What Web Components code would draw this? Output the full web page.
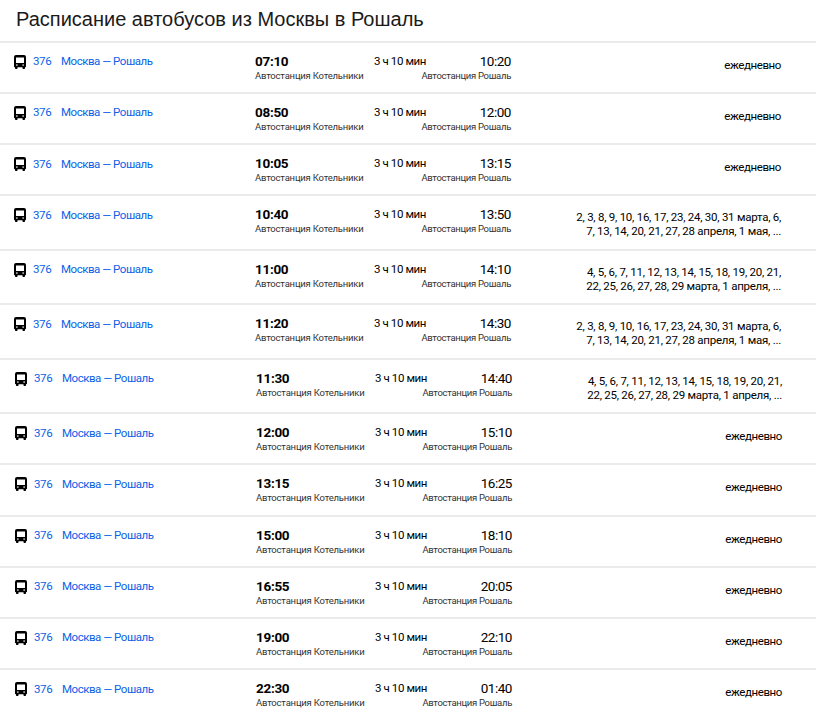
<!DOCTYPE html>
<html lang="ru">
<head>
<meta charset="utf-8">
<title>Расписание</title>
<style>
  html, body { margin: 0; background: #fff; }
  body { font-family: Roboto, "Liberation Sans", sans-serif; color: #000; }
</style>
</head>
<body>
<schedule-page heading="Расписание автобусов из Москвы в Рошаль">
  <bus-row dep="07:10" arr="10:20" days="ежедневно" tall="51"></bus-row>
  <bus-row dep="08:50" arr="12:00" days="ежедневно" tall="51"></bus-row>
  <bus-row dep="10:05" arr="13:15" days="ежедневно" tall="51" low></bus-row>
  <bus-row dep="10:40" arr="13:50" days="2, 3, 8, 9, 10, 16, 17, 23, 24, 30, 31 марта, 6, 7, 13, 14, 20, 21, 27, 28 апреля, 1 мая, ..." tall="55" low></bus-row>
  <bus-row dep="11:00" arr="14:10" days="4, 5, 6, 7, 11, 12, 13, 14, 15, 18, 19, 20, 21, 22, 25, 26, 27, 28, 29 марта, 1 апреля, ..." tall="54"></bus-row>
  <bus-row dep="11:20" arr="14:30" days="2, 3, 8, 9, 10, 16, 17, 23, 24, 30, 31 марта, 6, 7, 13, 14, 20, 21, 27, 28 апреля, 1 мая, ..." tall="55" low></bus-row>
  <bus-row dep="11:30" arr="14:40" days="4, 5, 6, 7, 11, 12, 13, 14, 15, 18, 19, 20, 21, 22, 25, 26, 27, 28, 29 марта, 1 апреля, ..." tall="54" shift></bus-row>
  <bus-row dep="12:00" arr="15:10" days="ежедневно" tall="51" shift low></bus-row>
  <bus-row dep="13:15" arr="16:25" days="ежедневно" tall="52" shift low></bus-row>
  <bus-row dep="15:00" arr="18:10" days="ежедневно" tall="51" shift></bus-row>
  <bus-row dep="16:55" arr="20:05" days="ежедневно" tall="51" shift></bus-row>
  <bus-row dep="19:00" arr="22:10" days="ежедневно" tall="51" shift></bus-row>
  <bus-row dep="22:30" arr="01:40" days="ежедневно" tall="51" shift low></bus-row>
</schedule-page>
<script>
class SchedulePage extends HTMLElement {
  constructor() {
    super();
    this.attachShadow({mode: "open"});
  }

  connectedCallback() {
    this.shadowRoot.innerHTML = `
      <style>
        :host { display: block; width: 816px; }
        h1 {
          margin: 0;
          height: 41px;
          padding: 7px 0 0 16px;
          box-sizing: border-box;
          font-family: "Liberation Sans", sans-serif;
          font-size: 20px;
          line-height: 24px;
          font-weight: 400;
          color: #1a1a1a;
        }
      </style>
      <h1>${this.getAttribute("heading")}</h1>
      <slot></slot>
    `;
  }
}

class BusRow extends HTMLElement {
  constructor() {
    super();
    this.attachShadow({mode: "open"});
  }

  connectedCallback() {
    this.shadowRoot.innerHTML = `
      <style>
        :host {
          display: grid;
          grid-template-columns: 33px 28px 194px 119px 47px 90px 1fr;
          box-sizing: border-box;
          height: ${this.getAttribute("tall")}px;
          border-top: 2px solid #ebebeb;
          padding-top: 9px;
          font-size: 11.5px;
          letter-spacing: -0.4px;
          line-height: 16px;
        }
        :host([shift]) { padding-left: 1px; }
        svg { display: block; width: 12px; height: 14px; margin: 3px 0 0 14px; }
        a { color: #0b5fe8; text-decoration: none; padding-top: 1px; }
        :host([low]) a { padding-top: 2px; }
        .trip { letter-spacing: -0.47px; }
        .time { font-size: 13.5px; letter-spacing: -0.3px; line-height: 18px; }
        .dep { font-weight: 700; }
        .station { font-size: 9.5px; letter-spacing: -0.2px; line-height: 12px; color: #333; white-space: nowrap; }
        .arr { text-align: right; display: flex; flex-direction: column; align-items: flex-end; }
        .arr .time { letter-spacing: -0.45px; }
        .arr .station { letter-spacing: -0.3px; }
        .dur { padding-top: 1px; white-space: nowrap; }
        .days {
          text-align: right;
          padding: 5.8px 35px 0 60px;
          line-height: 13.7px;
          letter-spacing: -0.25px;
        }
        .days.every { letter-spacing: -0.4px; padding-top: 7px; }
        :host([shift]) .days { padding-right: 34px; }
      </style>
      <svg viewBox="0 0 12 14" aria-hidden="true">
        <path fill="#000" fill-rule="evenodd" d="M2 0h8a2 2 0 0 1 2 2v9.5a.8.8 0 0 1-.8.8H11v1a.7.7 0 0 1-.7.7H9.2a.7.7 0 0 1-.7-.7v-1h-5v1a.7.7 0 0 1-.7.7H1.7a.7.7 0 0 1-.7-.7v-1H.8a.8.8 0 0 1-.8-.8V2a2 2 0 0 1 2-2zM2 2.4V8h8V2.4H2zm.9 6.9a.8.8 0 1 0 0 1.6.8.8 0 0 0 0-1.6zm6.2 0a.8.8 0 1 0 0 1.6.8.8 0 0 0 0-1.6z"/>
      </svg>
      <a href="#">376</a>
      <a class="trip" href="#">Москва — Рошаль</a>
      <div>
        <div class="time dep">${this.getAttribute("dep")}</div>
        <div class="station">Автостанция Котельники</div>
      </div>
      <div class="dur">3 ч 10 мин</div>
      <div class="arr">
        <div class="time">${this.getAttribute("arr")}</div>
        <div class="station">Автостанция Рошаль</div>
      </div>
      <div class="days ${this.getAttribute("days") === "ежедневно" ? "every" : ""}">${this.getAttribute("days")}</div>
    `;
  }
}

customElements.define("schedule-page", SchedulePage);
customElements.define("bus-row", BusRow);
</script>
</body>
</html>
